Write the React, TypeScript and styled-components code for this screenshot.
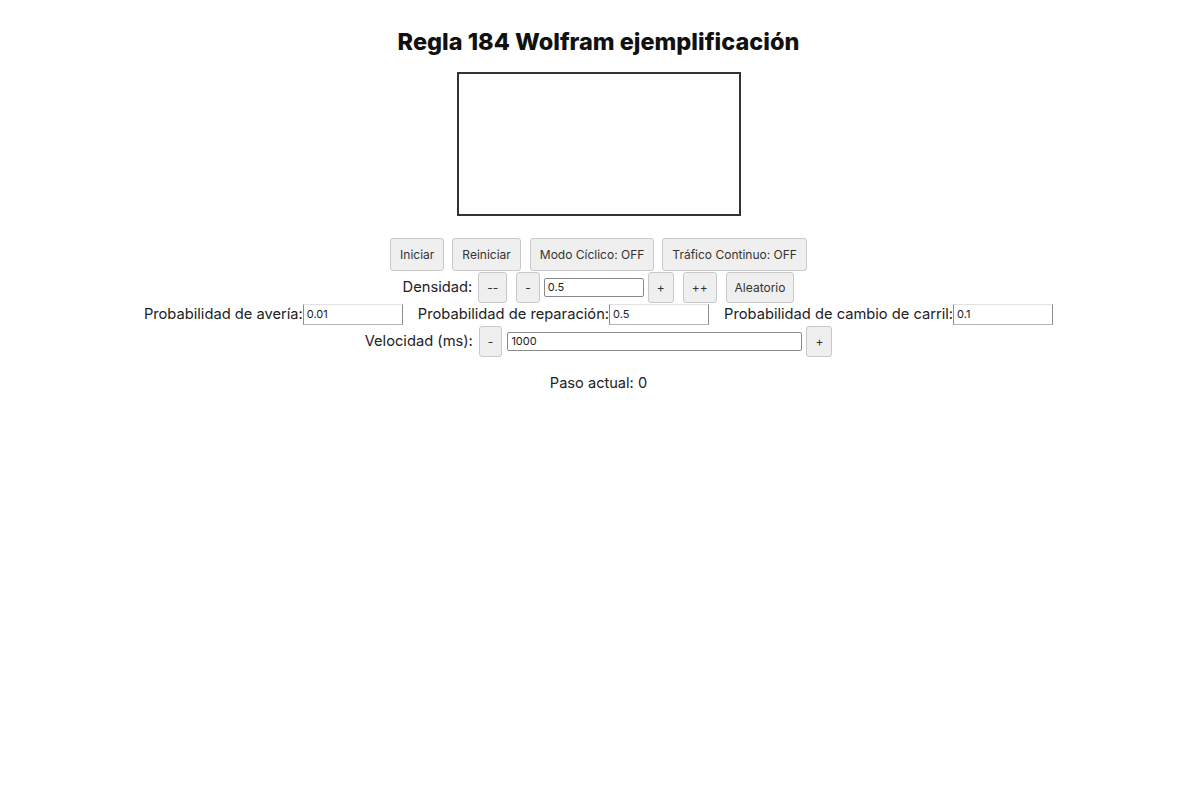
import React, { useState } from 'react';
import styled, { createGlobalStyle } from 'styled-components';

const GlobalStyle = createGlobalStyle`
  html, body {
    margin: 0;
    padding: 0;
    background: #ffffff;
  }
  body {
    font-family: Inter, "Noto Sans", "Liberation Sans", sans-serif;
    color: #1f1f1f;
  }
`;

const Page = styled.div`
  display: flex;
  flex-direction: column;
  align-items: center;
  padding-top: 30px;
`;

const Title = styled.h2`
  margin: 0 0 18px;
  font-size: 23.5px;
  line-height: 24px;
  font-weight: 800;
  color: #111;
`;

const Board = styled.div`
  width: 280px;
  height: 140px;
  border: 2px solid #333;
  background: #fff;
`;

const Row = styled.div<{ $h: number; $mt?: number }>`
  display: flex;
  align-items: center;
  justify-content: center;
  height: ${(p) => p.$h}px;
  margin-top: ${(p) => p.$mt || 0}px;
`;

const Button = styled.button<{ $h?: number; $ml?: number; $px?: number }>`
  height: ${(p) => p.$h || 33}px;
  margin-left: ${(p) => p.$ml || 0}px;
  padding: 0 ${(p) => p.$px ?? 9}px;
  font-family: Inter, "Noto Sans", "Liberation Sans", sans-serif;
  font-size: 12px;
  color: #333;
  background: #efefef;
  border: 1px solid #c9c9c9;
  border-radius: 3px;
  cursor: pointer;
  flex-shrink: 0;
`;

const Label = styled.span<{ $ml?: number }>`
  font-size: 14.7px;
  color: #222;
  margin-left: ${(p) => p.$ml || 0}px;
  white-space: nowrap;
`;

const Field = styled.input<{ $w: number; $ml?: number }>`
  box-sizing: border-box;
  width: ${(p) => p.$w}px;
  height: 19px;
  margin-left: ${(p) => p.$ml || 0}px;
  padding: 0 3px;
  font-family: Inter, "Noto Sans", "Liberation Sans", sans-serif;
  font-size: 11px;
  color: #222;
  border: 1px solid #8a8a8a;
  border-radius: 2px;
  outline: none;
`;

const FlatField = styled(Field)`
  height: 21px;
  border-radius: 0;
  border-top-color: #e2e2e2;
  border-bottom-color: #b5b5b5;
  border-left-color: #8c8c8c;
  border-right-color: #8c8c8c;
`;

const Status = styled.div`
  margin-top: 16px;
  font-size: 14.6px;
  line-height: 20px;
  color: #222;
`;

export default function App() {
  const [density, setDensity] = useState('0.5');
  const [speed, setSpeed] = useState('1000');
  const [failure, setFailure] = useState('0.01');
  const [repair, setRepair] = useState('0.5');
  const [lane, setLane] = useState('0.1');

  return (
    <>
      <GlobalStyle />
      <Page>
        <Title>Regla 184 Wolfram ejemplificación</Title>
        <Board />

        <Row $h={34} $mt={21}>
          <Button>Iniciar</Button>
          <Button $ml={8}>Reiniciar</Button>
          <Button $ml={9}>Modo Cíclico: OFF</Button>
          <Button $ml={8}>Tráfico Continuo: OFF</Button>
        </Row>

        <Row $h={32}>
          <Label>Densidad:</Label>
          <Button $h={31} $ml={6} $px={8}>--</Button>
          <Button $h={31} $ml={9} $px={8}>-</Button>
          <Field $w={100} $ml={4} value={density} onChange={(e) => setDensity(e.target.value)} />
          <Button $h={31} $ml={4} $px={8}>+</Button>
          <Button $h={31} $ml={9} $px={8}>++</Button>
          <Button $h={31} $ml={9} $px={8}>Aleatorio</Button>
        </Row>

        <Row $h={22}>
          <Label>Probabilidad de avería:</Label>
          <FlatField $w={100} value={failure} onChange={(e) => setFailure(e.target.value)} />
          <Label $ml={15}>Probabilidad de reparación:</Label>
          <FlatField $w={100} value={repair} onChange={(e) => setRepair(e.target.value)} />
          <Label $ml={15}>Probabilidad de cambio de carril:</Label>
          <FlatField $w={100} value={lane} onChange={(e) => setLane(e.target.value)} />
        </Row>

        <Row $h={32}>
          <Label>Velocidad (ms):</Label>
          <Button $h={31} $ml={6} $px={8}>-</Button>
          <Field $w={295} $ml={5} value={speed} onChange={(e) => setSpeed(e.target.value)} />
          <Button $h={31} $ml={4} $px={8}>+</Button>
        </Row>

        <Status>Paso actual: 0</Status>
      </Page>
    </>
  );
}
